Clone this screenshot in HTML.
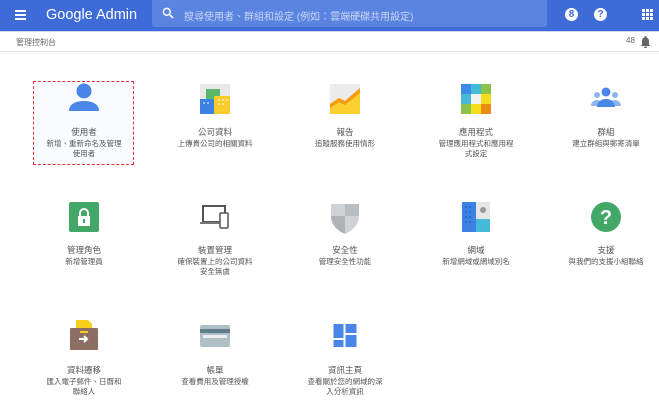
<!DOCTYPE html>
<html><head><meta charset="utf-8"><style>
*{margin:0;padding:0;box-sizing:border-box}
body{width:659px;height:406px;background:#fff;font-family:"Liberation Sans","Noto Sans CJK TC",sans-serif;position:relative;overflow:hidden;color:#555}
.hdr{position:absolute;left:0;top:0;width:659px;height:31px;background:#3e6bd8}
.search{position:absolute;left:152px;top:0;width:395px;height:27px;background:#5b84e1;border-radius:0 0 3px 3px}
.sub{position:absolute;left:0;top:31px;width:659px;height:21px;border-bottom:1px solid #e4e4e4;border-top:1px solid #c9d6f3}
.it{position:absolute;width:130px;text-align:center}
.ic{position:absolute;left:50%;transform:translateX(-50%)}
.t{position:absolute;width:100%;font-size:8.5px;color:#555}
.d{position:absolute;width:100%;font-size:7.5px;color:#555;line-height:10px;padding:0 27px}
</style></head><body>
<div class="hdr">
 <div style="position:absolute;left:15px;top:10px;width:11px;height:2px;background:#fff;box-shadow:0 4px 0 #fff,0 8px 0 #fff"></div>
 <div style="position:absolute;left:46px;top:7px;color:#fff;font-size:14.5px">Google Admin</div>
 <div class="search">
  <svg style="position:absolute;left:10px;top:7px" width="12" height="12" viewBox="0 0 12 12"><circle cx="4.8" cy="4.8" r="3.4" stroke="#fff" stroke-width="1.5" fill="none"/><path d="M7.3 7.3L11 11" stroke="#fff" stroke-width="1.6"/></svg>
  <div style="position:absolute;left:32px;top:8px;color:#c8d6f5;font-size:10px">搜尋使用者、群組和設定 (例如：雲端硬碟共用設定)</div>
 </div>
 <div style="position:absolute;left:565px;top:8px;width:13px;height:13px;border-radius:50%;background:#fff;color:#3e6bd8;font-size:10px;font-weight:bold;text-align:center;line-height:13px">8</div>
 <div style="position:absolute;left:594px;top:8px;width:13px;height:13px;border-radius:50%;background:#fff;color:#3e6bd8;font-size:10px;font-weight:bold;text-align:center;line-height:13px">?</div>
 <svg style="position:absolute;left:642px;top:9px" width="11" height="11" viewBox="0 0 11 11" fill="#fff"><rect x="0" y="0" width="3" height="3"/><rect x="4" y="0" width="3" height="3"/><rect x="8" y="0" width="3" height="3"/><rect x="0" y="4" width="3" height="3"/><rect x="4" y="4" width="3" height="3"/><rect x="8" y="4" width="3" height="3"/><rect x="0" y="8" width="3" height="3"/><rect x="4" y="8" width="3" height="3"/><rect x="8" y="8" width="3" height="3"/></svg>
</div>
<div class="sub">
 <div style="position:absolute;left:16px;top:5px;font-size:8px;color:#666">管理控制台</div>
 <div style="position:absolute;left:626px;top:4px;font-size:8px;color:#666">48</div>
 <svg style="position:absolute;left:640px;top:3px" width="11" height="13" viewBox="0 0 11 13"><path d="M5.5 1a1 1 0 0 1 1 1v.5C8.5 3 9 4.5 9 6.5v3l1.5 1.5H.5L2 9.5v-3C2 4.5 2.5 3 4.5 2.5V2a1 1 0 0 1 1-1z" fill="#666"/><rect x="4" y="11.5" width="3" height="1.5" rx=".7" fill="#666"/></svg>
</div>

<div style="position:absolute;left:33px;top:81px;width:101px;height:84px;border:1.5px dashed #e0302f;background:#f9fbfe"></div>

<!-- Row 1 -->
<div class="it" style="left:19px;top:80px">
 <svg class="ic" style="top:2px" width="32" height="30" viewBox="0 0 32 30"><circle cx="16" cy="9" r="7.5" fill="#4a86e8"/><path d="M1 29c0-7 7-10 15-10s15 3 15 10z" fill="#4a86e8"/></svg>
 <div class="t" style="top:46px">使用者</div>
 <div class="d" style="top:59px">新增、重新命名及管理使用者</div>
</div>
<div class="it" style="left:150px;top:80px">
 <svg class="ic" style="top:4px" width="30" height="30" viewBox="0 0 30 30"><rect width="30" height="30" rx="2" fill="#e8e8e8"/><rect x="6" y="5" width="14" height="24" fill="#57b86a"/><rect x="0" y="15" width="14" height="15" fill="#3b82e3"/><rect x="14" y="12" width="16" height="18" fill="#fbcb2d"/><g fill="#fff" opacity=".5"><rect x="3" y="18" width="2" height="2"/><rect x="7" y="18" width="2" height="2"/><rect x="18" y="15" width="2" height="2"/><rect x="22" y="15" width="2" height="2"/><rect x="26" y="15" width="2" height="2"/><rect x="18" y="19" width="2" height="2"/><rect x="22" y="19" width="2" height="2"/></g></svg>
 <div class="t" style="top:46px">公司資料</div>
 <div class="d" style="top:59px;padding:0">上傳貴公司的相關資料</div>
</div>
<div class="it" style="left:280px;top:80px">
 <svg class="ic" style="top:4px" width="30" height="30" viewBox="0 0 30 30"><rect width="30" height="30" rx="2" fill="#ececec"/><path d="M0 20l9-6 6 3 15-13v26H0z" fill="#fbd12f"/><path d="M0 20l9-6 6 3 15-13v5L15 21l-6-3-9 6z" fill="#f39c12"/></svg>
 <div class="t" style="top:46px">報告</div>
 <div class="d" style="top:59px;padding:0">追蹤服務使用情形</div>
</div>
<div class="it" style="left:411px;top:80px">
 <svg class="ic" style="top:4px" width="30" height="30" viewBox="0 0 30 30"><rect x="0" y="0" width="10" height="10" fill="#3d8ae8"/><rect x="10" y="0" width="10" height="10" fill="#42bad8"/><rect x="20" y="0" width="10" height="10" fill="#8bc34a"/><rect x="0" y="10" width="10" height="10" fill="#42bad8"/><rect x="10" y="10" width="10" height="10" fill="#f2f2f2"/><rect x="20" y="10" width="10" height="10" fill="#f5dc1c"/><rect x="0" y="20" width="10" height="10" fill="#8bc34a"/><rect x="10" y="20" width="10" height="10" fill="#f5dc1c"/><rect x="20" y="20" width="10" height="10" fill="#ea8c10"/></svg>
 <div class="t" style="top:46px">應用程式</div>
 <div class="d" style="top:59px">管理應用程式和應用程式設定</div>
</div>
<div class="it" style="left:541px;top:80px">
 <svg class="ic" style="top:7px" width="30" height="20" viewBox="0 0 30 20"><circle cx="15" cy="5" r="4.5" fill="#4a86e8"/><circle cx="6" cy="8" r="3" fill="#8fb5f0"/><circle cx="24" cy="8" r="3" fill="#8fb5f0"/><path d="M0 19c0-4 3-6 6-6s6 2 6 6z M18 19c0-4 3-6 6-6s6 2 6 6z" fill="#8fb5f0"/><path d="M6 20c0-5 4-8 9-8s9 3 9 8z" fill="#4a86e8"/></svg>
 <div class="t" style="top:46px">群組</div>
 <div class="d" style="top:59px;padding:0">建立群組與郵寄清單</div>
</div>

<!-- Row 2 -->
<div class="it" style="left:19px;top:202px">
 <svg class="ic" style="top:0" width="30" height="30" viewBox="0 0 30 30"><rect width="30" height="30" rx="2" fill="#43a867"/><path d="M11 14v-3a4 4 0 0 1 8 0v3" stroke="#fff" stroke-width="2" fill="none"/><rect x="9" y="14" width="12" height="10" fill="#fff"/><rect x="14" y="17" width="2" height="4" fill="#43a867"/></svg>
 <div class="t" style="top:42px">管理角色</div>
 <div class="d" style="top:55px">新增管理員</div>
</div>
<div class="it" style="left:150px;top:202px">
 <svg class="ic" style="top:2px" width="30" height="26" viewBox="0 0 30 26"><rect x="3" y="2" width="22" height="16" fill="#fff" stroke="#555" stroke-width="2"/><rect x="0" y="18" width="26" height="2" fill="#777"/><rect x="20" y="9" width="8" height="15" rx="1" fill="#fff" stroke="#555" stroke-width="1.5"/></svg>
 <div class="t" style="top:42px">裝置管理</div>
 <div class="d" style="top:55px">確保裝置上的公司資料安全無虞</div>
</div>
<div class="it" style="left:280px;top:202px">
 <svg class="ic" style="top:0" width="28" height="32" viewBox="0 0 28 32"><path d="M0 2h28v12c0 9-7 15-14 18C7 29 0 23 0 14z" fill="#cfd3d6"/><path d="M14 2h14v12H14z" fill="#b9bec2"/><path d="M0 14h14v18C7 29 0 23 0 14z" fill="#aeb3b7"/></svg>
 <div class="t" style="top:42px">安全性</div>
 <div class="d" style="top:55px;padding:0">管理安全性功能</div>
</div>
<div class="it" style="left:411px;top:202px">
 <svg class="ic" style="top:0" width="28" height="30" viewBox="0 0 28 30"><rect width="28" height="30" fill="#3b82e3"/><rect x="14" y="0" width="14" height="17" fill="#e6e6e6"/><rect x="14" y="17" width="14" height="13" fill="#42bad8"/><circle cx="21" cy="8" r="3" fill="#999"/><g fill="#2a6acb"><rect x="3" y="4" width="2" height="2"/><rect x="7" y="4" width="2" height="2"/><rect x="3" y="9" width="2" height="2"/><rect x="7" y="9" width="2" height="2"/><rect x="3" y="14" width="2" height="2"/><rect x="7" y="14" width="2" height="2"/><rect x="3" y="19" width="2" height="2"/><rect x="7" y="19" width="2" height="2"/></g></svg>
 <div class="t" style="top:42px">網域</div>
 <div class="d" style="top:55px;padding:0">新增網域或網域別名</div>
</div>
<div class="it" style="left:541px;top:202px">
 <svg class="ic" style="top:0" width="30" height="30" viewBox="0 0 30 30"><circle cx="15" cy="15" r="15" fill="#43a867"/><text x="15" y="22" text-anchor="middle" font-family="Liberation Sans" font-weight="bold" font-size="20" fill="#fff">?</text></svg>
 <div class="t" style="top:42px">支援</div>
 <div class="d" style="top:55px;padding:0">與我們的支援小組聯絡</div>
</div>

<!-- Row 3 -->
<div class="it" style="left:19px;top:320px">
 <svg class="ic" style="top:0" width="32" height="30" viewBox="0 0 32 30"><path d="M8 0h12l4 4v8H8z" fill="#f5cf1a"/><rect x="2" y="8" width="28" height="22" rx="1" fill="#8d6e63"/><rect x="12" y="11" width="8" height="2" fill="#f5cf1a"/><path d="M11 19h8M16 16l3 3-3 3" stroke="#fff" stroke-width="2" fill="none"/></svg>
 <div class="t" style="top:44px">資料遷移</div>
 <div class="d" style="top:57px">匯入電子郵件、日曆和聯絡人</div>
</div>
<div class="it" style="left:150px;top:320px">
 <svg class="ic" style="top:5px" width="30" height="22" viewBox="0 0 30 22"><rect width="30" height="22" rx="2" fill="#b0bec5"/><rect y="4" width="30" height="4" fill="#607d8b"/><rect x="3" y="10" width="24" height="3" fill="#eceff1"/></svg>
 <div class="t" style="top:44px">帳單</div>
 <div class="d" style="top:57px;padding:0">查看費用及管理授權</div>
</div>
<div class="it" style="left:280px;top:320px">
 <svg class="ic" style="top:4px" width="23" height="23" viewBox="0 0 23 23" fill="#4a86e8"><rect x="0" y="0" width="10" height="14"/><rect x="12" y="0" width="11" height="9"/><rect x="12" y="11" width="11" height="12"/><rect x="0" y="16" width="10" height="7"/></svg>
 <div class="t" style="top:44px">資訊主頁</div>
 <div class="d" style="top:57px">查看關於您的網域的深入分析資訊</div>
</div>
</body></html>
